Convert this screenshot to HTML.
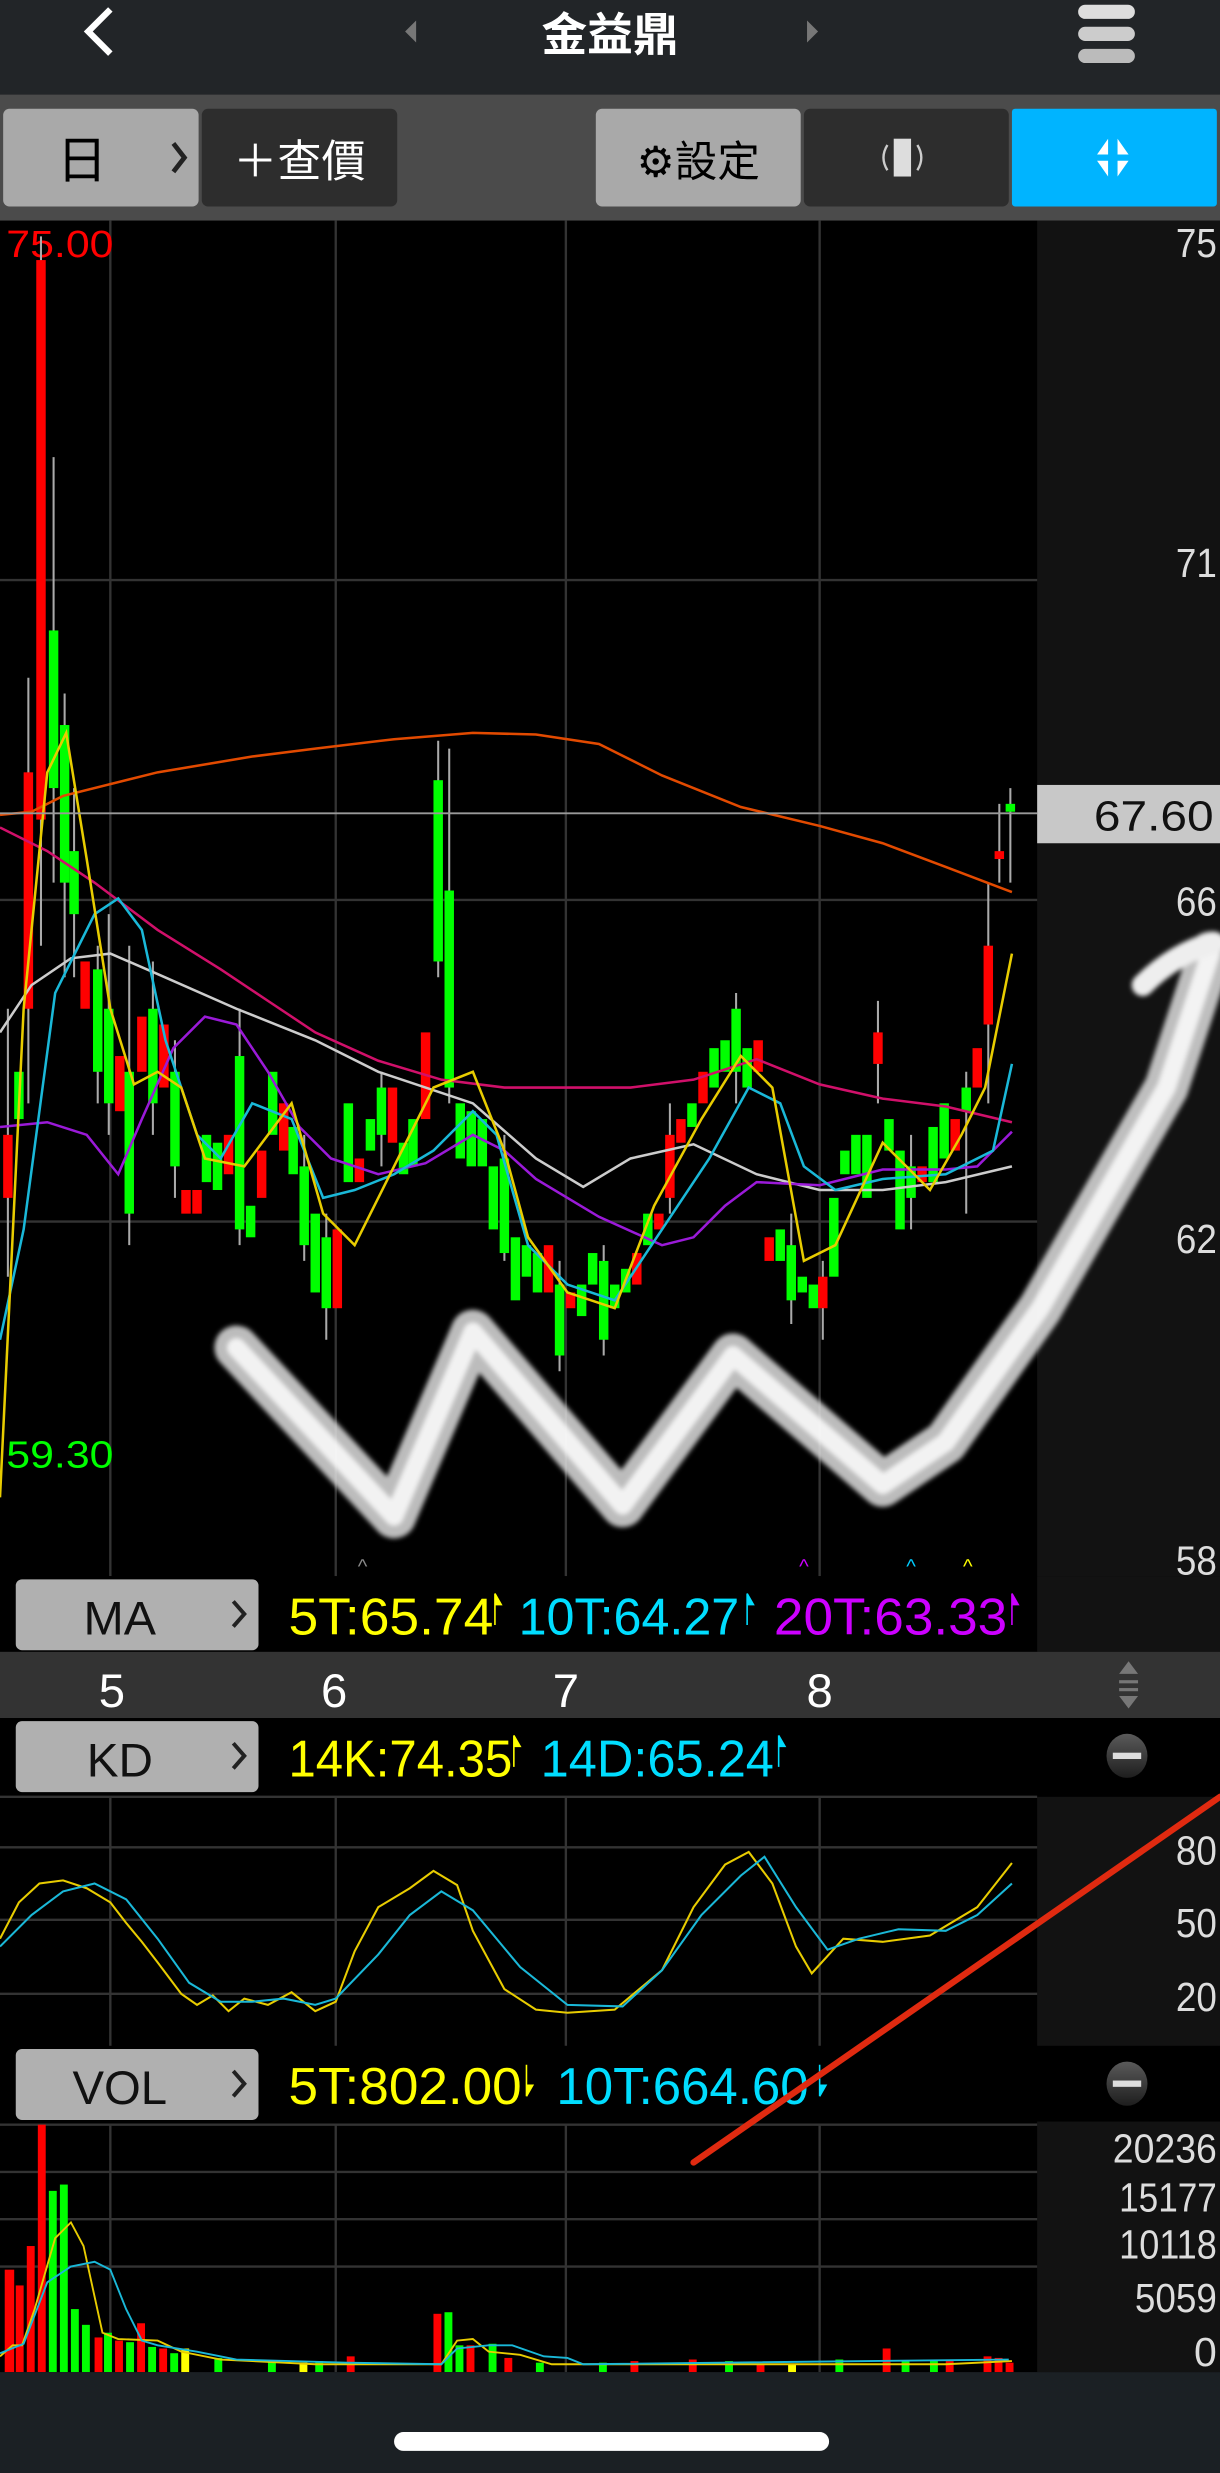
<!DOCTYPE html>
<html><head><meta charset="utf-8"><style>
html,body{margin:0;padding:0;background:#000;width:1220px;height:2473px;overflow:hidden}
svg{display:block}
text{font-family:"Liberation Sans","Noto Sans CJK TC",sans-serif}
</style></head><body>
<svg width="1220" height="2473" viewBox="0 0 774 1569" xmlns="http://www.w3.org/2000/svg" preserveAspectRatio="none">
<defs>
<linearGradient id="mg" x1="0" y1="0" x2="0" y2="1"><stop offset="0" stop-color="#5a5a5a"/><stop offset="1" stop-color="#1e1e1e"/></linearGradient>
<filter id="bl"><feGaussianBlur stdDeviation="1.5"/></filter>
</defs>
<rect x="0" y="0" width="774" height="60" fill="#222528"/>
<path d="M70 6 L56 20 L70 34" stroke="#fff" stroke-width="4" fill="none"/>
<path d="M264 13 L257 20 L264 27Z" fill="#777"/>
<path d="M512 13 L519 20 L512 27Z" fill="#777"/>
<text x="387" y="32" font-size="29" fill="#fff" text-anchor="middle" font-weight="bold">金益鼎</text>
<rect x="684" y="3" width="36" height="9" rx="4.5" fill="#ddd"/>
<rect x="684" y="17" width="36" height="9" rx="4.5" fill="#ccc"/>
<rect x="684" y="31" width="36" height="9" rx="4.5" fill="#bbb"/>
<rect x="0" y="60" width="774" height="80" fill="#4b4b4b"/>
<rect x="2" y="69" width="124" height="62" rx="4" fill="#a9a9a9"/>
<text x="52" y="113" font-size="32" fill="#000" text-anchor="middle">日</text>
<path d="M110 91 L117 100 L110 109" stroke="#222" stroke-width="3" fill="none"/>
<rect x="128" y="69" width="124" height="62" rx="4" fill="#2d2d2d"/>
<text x="190" y="112" font-size="28" fill="#fff" text-anchor="middle">＋查價</text>
<rect x="378" y="69" width="130" height="62" rx="4" fill="#a9a9a9"/>
<text x="443" y="112" font-size="27" fill="#000" text-anchor="middle">⚙設定</text>
<rect x="510" y="69" width="130" height="62" rx="4" fill="#2d2d2d"/>
<rect x="567" y="88" width="11" height="24" fill="#ddd"/>
<path d="M563 92 Q558 100 563 108 M582 92 Q587 100 582 108" stroke="#ccc" stroke-width="1.5" fill="none"/>
<rect x="642" y="69" width="130" height="62" rx="2" fill="#00b4ff"/>
<path d="M703 88 L703 98 L696 98Z M709 88 L709 98 L716 98Z M703 112 L703 102 L696 102Z M709 112 L709 102 L716 102Z" fill="#fff"/>
<rect x="0" y="140" width="658" height="860" fill="#000"/>
<rect x="658" y="140" width="116" height="860" fill="#121212"/>
<g stroke="#333" stroke-width="1.5">
<line x1="70" y1="140" x2="70" y2="1000"/><line x1="213" y1="140" x2="213" y2="1000"/><line x1="359" y1="140" x2="359" y2="1000"/><line x1="520" y1="140" x2="520" y2="1000"/>
<line x1="0" y1="368" x2="658" y2="368"/><line x1="0" y1="571" x2="658" y2="571"/><line x1="0" y1="775" x2="658" y2="775"/>
</g>
<g fill="#ddd" font-size="26" text-anchor="end">
<text x="772" y="163" textLength="26" lengthAdjust="spacingAndGlyphs">75</text><text x="772" y="366" textLength="26" lengthAdjust="spacingAndGlyphs">71</text><text x="772" y="581" textLength="26" lengthAdjust="spacingAndGlyphs">66</text><text x="772" y="795" textLength="26" lengthAdjust="spacingAndGlyphs">62</text><text x="772" y="999" textLength="26" lengthAdjust="spacingAndGlyphs">58</text>
</g>
<text x="4" y="163" font-size="24" fill="#f00" textLength="68" lengthAdjust="spacingAndGlyphs">75.00</text>
<text x="4" y="931" font-size="24" fill="#0f0" textLength="68" lengthAdjust="spacingAndGlyphs">59.30</text>
<g stroke="#aaa" stroke-width="1.3">
<line x1="5" y1="640" x2="5" y2="810"/><line x1="18" y1="430" x2="18" y2="700"/><line x1="26" y1="150" x2="26" y2="600"/><line x1="34" y1="290" x2="34" y2="560"/><line x1="41" y1="440" x2="41" y2="620"/><line x1="47" y1="500" x2="47" y2="620"/><line x1="62" y1="600" x2="62" y2="700"/><line x1="69" y1="580" x2="69" y2="720"/><line x1="82" y1="600" x2="82" y2="790"/><line x1="97" y1="610" x2="97" y2="720"/><line x1="111" y1="660" x2="111" y2="760"/><line x1="152" y1="640" x2="152" y2="790"/><line x1="193" y1="720" x2="193" y2="800"/><line x1="207" y1="770" x2="207" y2="850"/><line x1="242" y1="680" x2="242" y2="740"/><line x1="278" y1="470" x2="278" y2="620"/><line x1="285" y1="475" x2="285" y2="700"/><line x1="320" y1="720" x2="320" y2="800"/><line x1="355" y1="800" x2="355" y2="870"/><line x1="383" y1="790" x2="383" y2="860"/><line x1="425" y1="700" x2="425" y2="770"/><line x1="467" y1="630" x2="467" y2="700"/><line x1="502" y1="770" x2="502" y2="840"/><line x1="522" y1="800" x2="522" y2="850"/><line x1="557" y1="635" x2="557" y2="700"/><line x1="578" y1="720" x2="578" y2="780"/><line x1="613" y1="680" x2="613" y2="770"/><line x1="627" y1="560" x2="627" y2="700"/><line x1="634" y1="510" x2="634" y2="560"/><line x1="641" y1="500" x2="641" y2="560"/>
</g>
<g fill="#f00">
<rect x="2" y="720" width="6" height="40"/><rect x="15" y="490" width="6" height="150"/><rect x="23" y="165" width="6" height="355"/><rect x="51" y="610" width="6" height="30"/><rect x="73" y="670" width="6" height="35"/><rect x="87" y="645" width="6" height="35"/><rect x="101" y="650" width="6" height="40"/><rect x="115" y="755" width="6" height="15"/><rect x="122" y="755" width="6" height="15"/><rect x="142" y="720" width="6" height="25"/><rect x="163" y="730" width="6" height="30"/><rect x="177" y="700" width="6" height="30"/><rect x="211" y="780" width="6" height="50"/><rect x="225" y="735" width="6" height="15"/><rect x="246" y="690" width="6" height="35"/><rect x="267" y="655" width="6" height="55"/><rect x="345" y="790" width="6" height="30"/><rect x="359" y="820" width="6" height="10"/><rect x="401" y="795" width="6" height="20"/><rect x="415" y="770" width="6" height="10"/><rect x="422" y="720" width="6" height="40"/><rect x="429" y="710" width="6" height="15"/><rect x="443" y="680" width="6" height="20"/><rect x="478" y="660" width="6" height="20"/><rect x="485" y="785" width="6" height="15"/><rect x="519" y="810" width="6" height="20"/><rect x="554" y="655" width="6" height="20"/><rect x="582" y="740" width="6" height="10"/><rect x="603" y="710" width="6" height="20"/><rect x="617" y="665" width="6" height="25"/><rect x="624" y="600" width="6" height="50"/><rect x="631" y="540" width="6" height="5"/>
</g>
<g fill="#0f0">
<rect x="9" y="680" width="6" height="30"/><rect x="31" y="400" width="6" height="100"/><rect x="38" y="460" width="6" height="100"/><rect x="44" y="540" width="6" height="40"/><rect x="59" y="615" width="6" height="65"/><rect x="66" y="640" width="6" height="60"/><rect x="79" y="680" width="6" height="90"/><rect x="94" y="640" width="6" height="60"/><rect x="108" y="680" width="6" height="60"/><rect x="128" y="720" width="6" height="30"/><rect x="135" y="725" width="6" height="30"/><rect x="149" y="670" width="6" height="110"/><rect x="156" y="765" width="6" height="20"/><rect x="170" y="680" width="6" height="40"/><rect x="183" y="715" width="6" height="30"/><rect x="190" y="740" width="6" height="50"/><rect x="197" y="770" width="6" height="50"/><rect x="204" y="785" width="6" height="45"/><rect x="218" y="700" width="6" height="50"/><rect x="232" y="710" width="6" height="20"/><rect x="239" y="690" width="6" height="30"/><rect x="253" y="725" width="6" height="20"/><rect x="259" y="710" width="6" height="30"/><rect x="275" y="495" width="6" height="115"/><rect x="282" y="565" width="6" height="125"/><rect x="289" y="700" width="6" height="35"/><rect x="296" y="705" width="6" height="35"/><rect x="303" y="710" width="6" height="30"/><rect x="310" y="740" width="6" height="40"/><rect x="317" y="735" width="6" height="60"/><rect x="324" y="785" width="6" height="40"/><rect x="331" y="790" width="6" height="20"/><rect x="338" y="795" width="6" height="25"/><rect x="352" y="815" width="6" height="45"/><rect x="366" y="815" width="6" height="20"/><rect x="373" y="795" width="6" height="20"/><rect x="380" y="800" width="6" height="50"/><rect x="387" y="815" width="6" height="15"/><rect x="394" y="805" width="6" height="15"/><rect x="408" y="770" width="6" height="20"/><rect x="436" y="700" width="6" height="15"/><rect x="450" y="665" width="6" height="25"/><rect x="457" y="660" width="6" height="20"/><rect x="464" y="640" width="6" height="40"/><rect x="471" y="665" width="6" height="25"/><rect x="492" y="780" width="6" height="20"/><rect x="499" y="790" width="6" height="35"/><rect x="506" y="810" width="6" height="10"/><rect x="513" y="815" width="6" height="15"/><rect x="526" y="760" width="6" height="50"/><rect x="533" y="730" width="6" height="15"/><rect x="540" y="720" width="6" height="25"/><rect x="547" y="720" width="6" height="40"/><rect x="561" y="710" width="6" height="20"/><rect x="568" y="730" width="6" height="50"/><rect x="575" y="740" width="6" height="20"/><rect x="589" y="715" width="6" height="35"/><rect x="596" y="700" width="6" height="35"/><rect x="610" y="690" width="6" height="15"/><rect x="638" y="510" width="6" height="5"/>
</g>
<g fill="none" stroke-width="1.6">
<polyline stroke="#e24a00" points="0,517 20,515 40,505 100,490 160,480 200,475 250,469 300,465 340,466 380,472 420,492 470,512 520,524 560,535 600,550 642,566"/>
<polyline stroke="#ccc" points="0,655 20,625 45,608 70,605 100,618 150,640 200,660 240,680 300,700 340,735 370,753 400,735 440,726 480,745 520,755 560,755 600,750 642,740"/>
<polyline stroke="#d0106a" points="0,525 30,540 60,560 100,590 140,615 170,635 200,655 240,673 280,685 320,690 400,690 440,685 480,672 520,688 560,697 600,702 642,712"/>
<polyline stroke="#9a1ad8" points="0,715 30,712 55,720 75,745 90,710 110,665 130,645 150,650 170,680 190,715 210,735 240,745 270,738 300,720 320,730 340,748 380,772 420,790 440,785 460,765 480,750 520,752 560,742 600,742 620,740 642,718"/>
<polyline stroke="#1ab8d8" points="0,850 15,780 35,630 60,580 75,570 90,590 105,660 125,720 140,735 160,700 185,710 205,760 225,755 250,745 275,730 300,705 315,720 335,790 360,815 390,825 420,780 450,735 475,690 495,700 510,740 530,755 560,748 600,745 630,730 642,675"/>
<polyline stroke="#e8cc00" points="0,950 15,640 30,490 42,465 55,545 70,640 85,688 100,680 115,690 130,735 155,740 185,700 205,770 225,790 250,740 275,690 300,680 320,730 335,785 360,820 390,830 415,765 445,710 470,670 490,690 510,800 530,790 560,725 590,755 610,720 625,690 642,605"/>
</g>
<line x1="0" y1="516" x2="658" y2="516" stroke="#999" stroke-width="1.2"/>
<rect x="658" y="498" width="116" height="37" fill="#c8c8c8"/>
<text x="770" y="527" font-size="27" fill="#111" text-anchor="end" textLength="76" lengthAdjust="spacingAndGlyphs">67.60</text>
<g filter="url(#bl)" fill="none" stroke-linecap="round" stroke-linejoin="round">
<path d="M150 855 L250 962 L300 845 L395 955 L465 860 L560 942 L600 915 L660 830 L740 690 L768 605" stroke="#ddd" stroke-width="28" opacity="0.85"/>
<path d="M150 855 L250 962 L300 845 L395 955 L465 860 L560 942 L600 915 L660 830 L740 690 L768 605" stroke="#fff" stroke-width="12" opacity="0.8"/>
<path d="M725 625 Q745 605 770 598" stroke="#eee" stroke-width="14"/>
</g>
<g font-size="13" text-anchor="middle"><text x="230" y="998" fill="#888">^</text><text x="510" y="998" fill="#c0f">^</text><text x="578" y="998" fill="#0cf">^</text><text x="614" y="998" fill="#ff0">^</text></g>
<rect x="0" y="1000" width="658" height="48" fill="#000"/><rect x="658" y="1000" width="116" height="48" fill="#121212"/>
<rect x="10" y="1002" width="154" height="45" rx="4" fill="#b0b0b0"/>
<text x="76" y="1037" font-size="30" fill="#111" text-anchor="middle" textLength="46" lengthAdjust="spacingAndGlyphs">MA</text>
<path d="M148 1016 L155 1024 L148 1032" stroke="#222" stroke-width="2.5" fill="none"/>
<text x="183" y="1037" font-size="33" fill="#ff0" textLength="130" lengthAdjust="spacingAndGlyphs">5T:65.74</text>
<text x="329" y="1037" font-size="33" fill="#0df" textLength="140" lengthAdjust="spacingAndGlyphs">10T:64.27</text>
<text x="491" y="1037" font-size="33" fill="#c0f" textLength="148" lengthAdjust="spacingAndGlyphs">20T:63.33</text>
<path d="M314 1011 v20 M314 1011 l4 7 h-4" stroke="#ff0" fill="#ff0"/><path d="M474 1011 v20 M474 1011 l4 7 h-4" stroke="#0df" fill="#0df"/><path d="M642 1011 v20 M642 1011 l4 7 h-4" stroke="#c0f" fill="#c0f"/>
<rect x="0" y="1048" width="774" height="42" fill="#333"/>
<g font-size="30" fill="#fff" text-anchor="middle"><text x="71" y="1083">5</text><text x="212" y="1083">6</text><text x="359" y="1083">7</text><text x="520" y="1083">8</text></g>
<path d="M710 1062 L716 1054 L722 1062Z M710 1076 L716 1084 L722 1076Z" fill="#777"/><rect x="710" y="1066" width="12" height="2" fill="#777"/><rect x="710" y="1071" width="12" height="2" fill="#777"/>
<rect x="0" y="1090" width="774" height="50" fill="#000"/>
<rect x="10" y="1092" width="154" height="45" rx="4" fill="#b0b0b0"/>
<text x="76" y="1127" font-size="30" fill="#111" text-anchor="middle" textLength="42" lengthAdjust="spacingAndGlyphs">KD</text>
<path d="M148 1106 L155 1114 L148 1122" stroke="#222" stroke-width="2.5" fill="none"/>
<text x="183" y="1127" font-size="33" fill="#ff0" textLength="142" lengthAdjust="spacingAndGlyphs">14K:74.35</text>
<text x="343" y="1127" font-size="33" fill="#0df" textLength="148" lengthAdjust="spacingAndGlyphs">14D:65.24</text>
<path d="M326 1101 v20 M326 1101 l4 7 h-4" stroke="#ff0" fill="#ff0"/><path d="M494 1101 v20 M494 1101 l4 7 h-4" stroke="#0df" fill="#0df"/>
<ellipse cx="715" cy="1114" rx="13" ry="14" fill="url(#mg)"/><rect x="706" y="1112" width="18" height="4" fill="#ddd"/>
<rect x="0" y="1140" width="658" height="158" fill="#000"/><rect x="658" y="1140" width="116" height="158" fill="#121212"/>
<g stroke="#333" stroke-width="1.5">
<line x1="0" y1="1140" x2="658" y2="1140"/><line x1="70" y1="1140" x2="70" y2="1298"/><line x1="213" y1="1140" x2="213" y2="1298"/><line x1="359" y1="1140" x2="359" y2="1298"/><line x1="520" y1="1140" x2="520" y2="1298"/>
<line x1="0" y1="1172" x2="658" y2="1172"/><line x1="0" y1="1218" x2="658" y2="1218"/><line x1="0" y1="1265" x2="658" y2="1265"/>
</g>
<g fill="#ddd" font-size="26" text-anchor="end"><text x="772" y="1183" textLength="26" lengthAdjust="spacingAndGlyphs">80</text><text x="772" y="1229" textLength="26" lengthAdjust="spacingAndGlyphs">50</text><text x="772" y="1276" textLength="26" lengthAdjust="spacingAndGlyphs">20</text></g>
<g fill="none" stroke-width="1.3">
<polyline stroke="#e8cc00" points="0,1230 12,1207 25,1195 40,1193 55,1198 70,1207 80,1220 90,1232 100,1245 115,1265 125,1272 135,1266 145,1276 155,1268 170,1272 185,1264 200,1276 213,1270 225,1238 240,1210 260,1198 275,1187 290,1196 300,1225 320,1262 340,1275 360,1277 390,1275 420,1250 440,1210 460,1183 475,1175 490,1195 505,1235 515,1252 535,1230 560,1232 590,1228 620,1210 642,1182"/>
<polyline stroke="#1ab8d8" points="0,1235 20,1215 40,1200 60,1195 80,1205 100,1230 120,1258 140,1270 160,1270 180,1268 200,1272 213,1268 240,1240 260,1215 280,1200 300,1212 330,1248 360,1272 395,1273 420,1250 445,1215 470,1190 485,1178 505,1210 525,1237 545,1230 570,1224 600,1225 620,1215 642,1195"/>
</g>
<rect x="0" y="1298" width="774" height="48" fill="#000"/>
<rect x="10" y="1300" width="154" height="45" rx="4" fill="#b0b0b0"/>
<text x="76" y="1335" font-size="30" fill="#111" text-anchor="middle" textLength="60" lengthAdjust="spacingAndGlyphs">VOL</text>
<path d="M148 1314 L155 1322 L148 1330" stroke="#222" stroke-width="2.5" fill="none"/>
<text x="183" y="1335" font-size="33" fill="#ff0" textLength="148" lengthAdjust="spacingAndGlyphs">5T:802.00</text>
<text x="353" y="1335" font-size="33" fill="#0df" textLength="160" lengthAdjust="spacingAndGlyphs">10T:664.60</text>
<path d="M334 1310 v20 M334 1330 l4 -7 h-4" stroke="#ff0" fill="#ff0"/><path d="M520 1310 v20 M520 1330 l4 -7 h-4" stroke="#0df" fill="#0df"/>
<ellipse cx="715" cy="1322" rx="13" ry="14" fill="url(#mg)"/><rect x="706" y="1320" width="18" height="4" fill="#ddd"/>
<rect x="0" y="1346" width="658" height="159" fill="#000"/><rect x="658" y="1346" width="116" height="159" fill="#121212"/>
<g stroke="#333" stroke-width="1.5">
<line x1="0" y1="1348" x2="658" y2="1348"/><line x1="70" y1="1348" x2="70" y2="1505"/><line x1="213" y1="1348" x2="213" y2="1505"/><line x1="359" y1="1348" x2="359" y2="1505"/><line x1="520" y1="1348" x2="520" y2="1505"/>
<line x1="0" y1="1378" x2="658" y2="1378"/><line x1="0" y1="1408" x2="658" y2="1408"/><line x1="0" y1="1438" x2="658" y2="1438"/>
</g>
<g fill="#ddd" font-size="26" text-anchor="end"><text x="772" y="1372" textLength="66" lengthAdjust="spacingAndGlyphs">20236</text><text x="772" y="1403" textLength="62" lengthAdjust="spacingAndGlyphs">15177</text><text x="772" y="1433" textLength="62" lengthAdjust="spacingAndGlyphs">10118</text><text x="772" y="1467" textLength="52" lengthAdjust="spacingAndGlyphs">5059</text><text x="772" y="1501">0</text></g>
<g fill="#f00"><rect x="3" y="1440" width="6" height="65"/><rect x="10" y="1450" width="5" height="55"/><rect x="17" y="1425" width="5" height="80"/><rect x="24" y="1348" width="5" height="157"/><rect x="60" y="1483" width="5" height="22"/><rect x="73" y="1485" width="5" height="20"/><rect x="87" y="1474" width="5" height="31"/><rect x="101" y="1490" width="5" height="15"/><rect x="220" y="1495" width="5" height="10"/><rect x="275" y="1468" width="5" height="37"/><rect x="296" y="1488" width="5" height="17"/><rect x="320" y="1496" width="5" height="9"/><rect x="400" y="1498" width="5" height="7"/><rect x="437" y="1497" width="5" height="8"/><rect x="480" y="1500" width="5" height="5"/><rect x="560" y="1490" width="5" height="15"/><rect x="600" y="1498" width="5" height="7"/><rect x="624" y="1495" width="5" height="10"/><rect x="631" y="1496" width="5" height="9"/><rect x="638" y="1499" width="5" height="6"/></g>
<g fill="#0f0"><rect x="31" y="1390" width="5" height="115"/><rect x="38" y="1386" width="5" height="119"/><rect x="45" y="1465" width="5" height="40"/><rect x="52" y="1475" width="5" height="30"/><rect x="66" y="1480" width="5" height="25"/><rect x="80" y="1486" width="5" height="19"/><rect x="94" y="1489" width="5" height="16"/><rect x="108" y="1493" width="5" height="12"/><rect x="136" y="1496" width="5" height="9"/><rect x="170" y="1498" width="5" height="7"/><rect x="200" y="1498" width="5" height="7"/><rect x="282" y="1467" width="5" height="38"/><rect x="289" y="1488" width="5" height="17"/><rect x="310" y="1487" width="5" height="18"/><rect x="340" y="1499" width="5" height="6"/><rect x="380" y="1499" width="5" height="6"/><rect x="460" y="1498" width="5" height="7"/><rect x="530" y="1497" width="5" height="8"/><rect x="572" y="1498" width="5" height="7"/><rect x="590" y="1497" width="5" height="8"/></g>
<g fill="#ff0"><rect x="115" y="1490" width="5" height="15"/><rect x="190" y="1499" width="5" height="6"/><rect x="500" y="1500" width="5" height="5"/></g>
<g fill="none" stroke-width="1.2">
<polyline stroke="#e8cc00" points="0,1495 8,1488 14,1488 22,1465 35,1420 45,1410 53,1425 65,1480 75,1484 100,1485 115,1492 140,1497 200,1500 280,1500 290,1485 300,1484 310,1492 330,1494 350,1500 600,1500 642,1498"/>
<polyline stroke="#1ab8d8" points="0,1493 15,1487 30,1448 45,1438 60,1435 70,1440 80,1465 90,1485 100,1488 125,1492 150,1497 220,1499 280,1500 290,1490 310,1488 325,1488 345,1495 360,1496 370,1500 640,1497"/>
</g>
<line x1="440" y1="1372" x2="774" y2="1140" stroke="#e02a10" stroke-width="4" stroke-linecap="round"/>
<rect x="0" y="1505" width="774" height="64" fill="#1b2024"/>
<rect x="250" y="1543" width="276" height="12" rx="6" fill="#fff"/>
</svg>
</body></html>
